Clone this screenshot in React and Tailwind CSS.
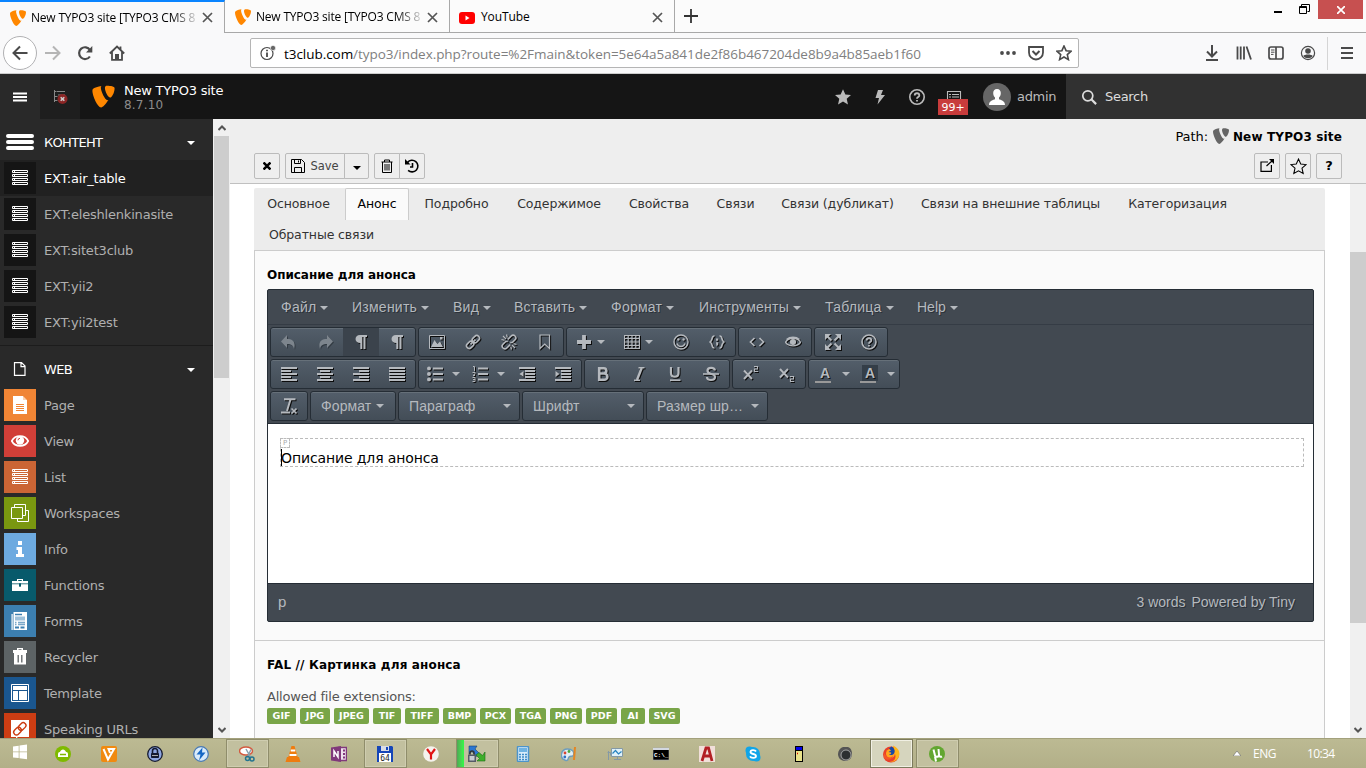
import React from "react";

const VERDANA = "font-['DejaVu_Sans',sans-serif]";
const SEGOE = "font-['Open_Sans',sans-serif]";

/* ---------- helpers ---------- */
function Svg({ s = 16, vb = "0 0 16 16", className = "", children, sw = 1.5, fill = "none", stroke = "currentColor" }) {
  return (
    <svg width={s} height={s} viewBox={vb} className={"block shrink-0 " + className} fill={fill} stroke={stroke} strokeWidth={sw}>
      {children}
    </svg>
  );
}

function Typo3({ s, color }) {
  return (
    <Svg s={s} fill={color} stroke="none">
      <path d="M11.1 10.3c-.2 0-.3.1-.5.1-1.7 0-4.3-6-4.3-8 0-.7.2-1 .4-1.2-2.1.3-4.7 1-5.5 2-.2.3-.3.6-.3 1.1 0 3.1 3.3 10.7 5.6 10.7 1.1 0 2.9-1.9 4.6-4.7" />
      <path d="M10.3 1.1c2.2 0 4.8.4 4.8 1.6 0 2.8-1.8 6-2.8 6-1.4 0-3.4-4-3.4-6.100 0-1.100.6-1.500 1.400-1.500" />
    </Svg>
  );
}

function Caret({ className = "" }) {
  return (
    <svg width="8" height="4" viewBox="0 0 8 4" className={"block shrink-0 " + className}>
      <path d="M0 0h8L4 4z" fill="currentColor" />
    </svg>
  );
}

const STAR = "M8 1l2.100 4.700 5 .5-3.800 3.400 1.100 5L8 12l-4.400 2.600 1.100-5L.9 6.200l5-.5z";

/* ---------- browser chrome ---------- */
function BrowserTab({ title, active, youtube }) {
  return (
    <div className={"flex h-[33px] w-[225px] shrink-0 items-center border-r border-[#a8a8a8] pl-[9px] " + (active ? "border-t-2 border-t-[#0a84ff] bg-[#f9f9fa]" : "border-b border-b-[#a8a8a8] pt-[2px]")}>
      {youtube ? (
        <svg width="16" height="12" viewBox="0 0 16 12" className="mt-[1px] shrink-0"><rect width="16" height="12" rx="3" fill="#f00" /><path d="M6.500 3.500l4 2.500-4 2.500z" fill="#fff" /></svg>
      ) : <Typo3 s={18} color="#ff8700" />}
      <span className={"w-[167px] whitespace-nowrap text-[12px] text-black " + (youtube ? "ml-[6px] tracking-[-0.100px]" : "ml-[4px] bg-[linear-gradient(90deg,#000_140px,transparent_170px)] bg-clip-text tracking-[-0.200px] text-transparent")}>{title}</span>
      <Svg s={11} vb="0 0 11 11" className="ml-[4px] text-[#555]" sw={1.7}><path d="M1 1l9 9M10 1l-9 9" /></Svg>
    </div>
  );
}

function Chrome() {
  return (
    <div className={"flex h-[74px] shrink-0 flex-col " + SEGOE}>
      <div className="flex h-[33px] bg-[#fbfbfb]">
        <BrowserTab title="New TYPO3 site [TYPO3 CMS 8" active />
        <BrowserTab title="New TYPO3 site [TYPO3 CMS 8" />
        <BrowserTab title="YouTube" youtube />
        <div className="flex flex-1 border-b border-[#a8a8a8] pl-[9px] pt-[9px] text-[#333]">
          <Svg s={14} vb="0 0 14 14" sw={1.800}><path d="M7 0v14M0 7h14" /></Svg>
        </div>
        <div className="flex h-[33px] items-start border-b border-[#a8a8a8]">
          <div className="mt-[11px] mr-[17px] h-[2px] w-[8px] bg-black" />
          <Svg s={11} vb="0 0 11 11" className="mt-[4px] mr-[8px] text-black" sw={1}><path d="M2.500 2.500v-2h8v7h-2M.5 2.500h7v7h-7zM.5 3.500h7" /></Svg>
          <div className="mr-[3px] flex h-[19px] w-[45px] items-center justify-center bg-[#c75050] text-white">
            <Svg s={8} vb="0 0 8 8" sw={1.700}><path d="M0 0l8 8M8 0L0 8" /></Svg>
          </div>
        </div>
      </div>
      <div className="flex h-[41px] items-center border-b border-[#ccc] bg-[#f9f9fa] pl-[3px] text-[#4a4a4a]">
        <div className="flex h-[34px] w-[34px] items-center justify-center rounded-full border border-[#b1b1b3] bg-white">
          <Svg s={16} sw={2}><path d="M15.500 8H2M8 1.500L1.500 8 8 14.500" /></Svg>
        </div>
        <Svg s={16} sw={2} className="ml-[8px] text-[#b5b5b5]"><path d="M0 8h14M8 1.500L14.500 8 8 14.500" /></Svg>
        <Svg s={16} sw={2.200} className="ml-[16px]"><path d="M12.900 11.500A5.900 5.900 0 1 1 13 5" /><path d="M15.300 1v6.500H9z" fill="currentColor" stroke="none" /></Svg>
        <Svg s={16} sw={1.800} className="ml-[16px]"><path d="M.8 8.500L8 1.500l7.200 7M3 7v7.800h10V7M11.500 1.500v3" /><path d="M6 9h4v5.500H6z" fill="currentColor" stroke="none" /></Svg>
        <div className="ml-[125px] flex h-[30px] w-[829px] items-center rounded-[2px] border border-[#b5b5b5] bg-white pl-[9px]">
          <Svg s={16} sw={1.200}><circle cx="7" cy="8.500" r="6" /><path d="M7 7.500v4.500M7 4.800v1.500" strokeWidth="1.800" /><circle cx="13" cy="3" r="2.600" fill="#666" stroke="#fff" strokeWidth=".6" /></Svg>
          <div className="ml-[8px] mt-[2px] flex-1 whitespace-nowrap text-[13.500px] tracking-[-0.050px] text-[#808080]"><span className="text-black">t3club.com</span>/typo3/index.php?route=%2Fmain&amp;token=5e64a5a841de2f86b467204de8b9a4b85aeb1f60</div>
          <Svg s={16} fill="currentColor" stroke="none"><circle cx="2" cy="8" r="1.900" /><circle cx="8" cy="8" r="1.900" /><circle cx="14" cy="8" r="1.900" /></Svg>
          <Svg s={16} sw={1.800} className="ml-[12px]"><path d="M1 2h14v5.500a7 7 0 0 1-14 0z" /><path d="M4.500 6L8 9.500 11.500 6" strokeWidth="2" /></Svg>
          <Svg s={16} sw={1.600} className="ml-[12px] mr-[6px]"><path d={STAR} /></Svg>
        </div>
        <div className="ml-auto flex h-full items-center">
          <Svg s={16} vb="0 0 14 16" sw={2}><path d="M7 0v11M2 6.500l5 5 5-5M1 15h12" /></Svg>
          <Svg s={16} sw={1.800} className="ml-[16px]"><path d="M1.500 1.500v13M4.700 1.500v13M8 1.500v13M10.500 1.500l4.500 13" /></Svg>
          <Svg s={16} sw={1.700} className="ml-[16px]"><rect x="1" y="2" width="14" height="12" rx="2" /><path d="M8 2v12" /><path d="M3 5h3.500M3 7.200h3.500M3 9.400h2.500" strokeWidth="1" /></Svg>
          <Svg s={16} sw={1.200} className="ml-[16px]"><circle cx="8" cy="8" r="6.600" /><circle cx="8" cy="6" r="2.800" fill="currentColor" stroke="none" /><path d="M3.300 11c1-2 8.400-2 9.400 0-2 3-7.400 3-9.400 0z" fill="currentColor" stroke="none" /></Svg>
          <div className="ml-[11px] h-[33px] w-px bg-[#d5d5d5]" />
          <Svg s={12} vb="0 0 12 12" sw={2} className="ml-[13px] mr-[13px]"><path d="M0 1h12M0 6h12M0 11h12" /></Svg>
        </div>
      </div>
    </div>
  );
}

/* ---------- TYPO3 top bar ---------- */
function TopBar() {
  return (
    <div className={"flex h-[45px] shrink-0 items-center bg-[#151515] text-[#bbb] " + VERDANA}>
      <div className="flex h-full w-[40px] items-center justify-center bg-[#292929] text-white">
        <Svg s={14} vb="0 0 14 9" sw={2}><path d="M0 1h14M0 4.500h14M0 8h14" /></Svg>
      </div>
      <div className="flex h-full w-[40px] items-center justify-center bg-[#1e1e1e] text-[#888]">
        <Svg s={16} sw={1} className="mt-[2px]"><path d="M2.500 0v12M2.500 1.500h2M5 1.500h8M2.500 6.500h3M2.500 10.500h3M6 5h7" /><circle cx="10.500" cy="9" r="5" fill="#8b2525" stroke="none" /><path d="M8.700 7.200l3.600 3.600M12.300 7.200l-3.600 3.600" stroke="#ccc" strokeWidth="1.600" /></Svg>
      </div>
      <div className="flex items-center pl-[11px]">
        <Typo3 s={25} color="#ff8700" />
        <div className="ml-[8px] mt-[2px] flex flex-col whitespace-nowrap">
          <span className="text-[13px] leading-[14px] tracking-[-0.220px] text-white">New TYPO3 site</span>
          <span className="text-[12px] leading-[14px] tracking-[0.200px] text-[#8c8c8c]">8.7.10</span>
        </div>
      </div>
      <div className="ml-auto flex h-full items-center">
        <Svg s={18} fill="currentColor" stroke="none"><path d={STAR} /></Svg>
        <Svg s={16} fill="currentColor" stroke="none" className="ml-[20px]"><path d="M6 1h5L9 6h4L5.500 15.500 7 9H3.500z" /></Svg>
        <Svg s={16} sw={1.600} className="ml-[21px]"><circle cx="8" cy="8" r="7.200" /><path d="M5.700 6.500c0-3 4.600-3 4.600 0 0 1.600-2.300 1.600-2.300 3.200M8 11v1.600" strokeWidth="1.800" /></Svg>
        <div className="relative ml-[21px] flex h-full w-[16px] items-center">
          <Svg s={16} sw={1.100}><path d="M1.500 2.500h13v11h-13zM3 5.500h2M6 5.500h7M3 8h2M6 8h7M3 10.500h10" /></Svg>
          <div className="absolute left-[-8px] top-[25px] flex h-[16px] w-[30px] items-center justify-center bg-[#c83c3c] pt-[2px] text-[11px] tracking-[0px] text-white">99+</div>
        </div>
        <div className="ml-[21px] flex h-[28px] w-[28px] items-center justify-center rounded-full bg-[#666] text-white">
          <Svg s={16} fill="currentColor" stroke="none"><path d="M8 0c2.600 0 3.800 1.700 3.800 4 0 2-.8 3.600-1.800 4.500v1.800c1.500.8 6 1.200 6 5.700H0c0-4.500 4.500-4.900 6-5.700V8.500C5 7.600 4.200 6 4.200 4 4.200 1.700 5.400 0 8 0z" /></Svg>
        </div>
        <span className="ml-[6px] w-[49px] whitespace-nowrap text-[13px] tracking-[-0.300px]">admin</span>
        <div className="flex h-full w-[300px] items-center bg-[#313131] pl-[15px] text-[#ddd]">
          <Svg s={16} sw={1.700}><circle cx="6.800" cy="6.800" r="5" /><path d="M10.300 10.300l4.800 4.800" strokeWidth="2.200" /></Svg>
          <span className="ml-[8px] text-[13px] tracking-[-0.300px]">Search</span>
        </div>
      </div>
    </div>
  );
}

/* ---------- module menu ---------- */
const ListGlyph = () => (
  <Svg s={16} sw={1}><path d="M.5 .5h15v2H.5zM.5 4.500h15v2H.5zM.5 8.500h15v2H.5zM.5 12.500h15v2H.5zM2.500 .5v2M2.500 4.500v2M2.500 8.500v2M2.500 12.500v2" /></Svg>
);
const PageGlyph = () => (
  <Svg s={18} vb="0 0 18 18" fill="#fff" stroke="none"><path d="M2 0h10v4h4v14H2z" /><path d="M12 0l4 4h-4z" fill="#fbd3b0" /><path d="M5 8.500h8M5 10.500h8M5 12.500h8M5 14.500h8" stroke="#f08535" strokeWidth="1" /></Svg>
);
const EyeGlyph = () => (
  <Svg s={18} vb="0 0 18 18" sw={1.700}><path d="M.8 9C4 2.600 14 2.600 17.200 9 14 15.400 4 15.400.8 9z" /><circle cx="9" cy="8.500" r="4.200" fill="#fff" stroke="none" /><path d="M7 8.300a2 2 0 0 1 2-2" stroke="#d13f38" strokeWidth="1" /></Svg>
);
const WorkGlyph = () => (
  <Svg s={18} vb="0 0 18 18" sw={1}><path d="M.5 3.500h11v11H.5zM3.500 3.500v-3h11v11h-3M14.500 6.500h3v11h-11v-3" /></Svg>
);
const InfoGlyph = () => (
  <Svg s={16} fill="#fff" stroke="none"><path d="M6 0h4v4H6zM4.500 6H10v7h2v3H4v-3h2V9H4.500z" /></Svg>
);
const FuncGlyph = () => (
  <Svg s={16} fill="#fff" stroke="none"><path d="M5 2h6v2h5v4.500H9V7H7v1.500H0V4h5zM6.200 3v1h3.600V3zM0 5.200z" fillRule="evenodd" /><path d="M0 7h7v2.500h2V7h7v7H0z" /><path d="M0 6.800h16" stroke="#085a6b" strokeWidth=".8" /><path d="M8 6v3.500" stroke="#085a6b" strokeWidth="1.400" /></Svg>
);
const FormGlyph = () => (
  <Svg s={18} vb="0 0 18 18" fill="#fff" stroke="none"><path d="M2.500 0H16v18H2.500zM.5 2h1.200v16H.5z" /><path d="M4 2.500h7" stroke="#3c7fb0" /><path d="M4 4.500h10v4H4z" fill="#9fc1da" /><path d="M4 10.500h1.500M7 10.500h7M4 12.500h1.500M7 12.500h7" stroke="#7aa8ca" /><path d="M4 14.500h4v2H4zM9.500 14.500h4v2h-4z" fill="#3c7fb0" /></Svg>
);
const BinGlyph = () => (
  <Svg s={18} vb="0 0 18 18" fill="#fff" stroke="none"><path d="M6 0h6v2h4v3H2V2h4zM7.500 1.200V2h3v-.8z" fillRule="evenodd" /><path d="M3 5h12v11.500H3z" /><path d="M7.200 7v7.500M10.800 7v7.500" stroke="#5d6365" strokeWidth="1.300" /></Svg>
);
const TplGlyph = () => (
  <Svg s={18} vb="0 0 18 18" sw={1}><path d="M.5 .5h17v17H.5z" /><path d="M2 2h14v4H2zM2 7h5v9H2zM8 7h8v9H8z" fill="#fff" stroke="none" /></Svg>
);
const LinkSign = () => (
  <Svg s={18} vb="0 0 18 18" fill="#fff" stroke="none"><path d="M0 0h18v17H7l-2 1.500V17H0z" /><g transform="rotate(-45 9 9)" fill="none" stroke="#cc3d13" strokeWidth="1.400"><rect x="1.500" y="6" width="8.500" height="5.500" rx="2.700" /><rect x="8" y="6" width="8.500" height="5.500" rx="2.700" /></g></Svg>
);

function ModuleRow({ label, color, Glyph, active }) {
  return (
    <div className={"flex h-[36px] shrink-0 items-center pl-[4px] text-[13px] tracking-[-0.200px] " + (active ? "bg-[#212121] text-white" : "text-[#b0b0b0]")}>
      <div className={"flex h-[32px] w-[32px] items-center justify-center text-white " + color}><Glyph /></div>
      <span className="ml-[8px] whitespace-nowrap pt-[2px]">{label}</span>
    </div>
  );
}

function ScrollArrow({ up }) {
  return (
    <Svg s={8} vb="0 0 8 8" sw={2} className="text-[#555]"><path d={up ? "M.5 6L4 2.500 7.500 6" : "M.5 2L4 5.500 7.500 2"} /></Svg>
  );
}

function Sidebar() {
  const ext = ["EXT:air_table", "EXT:eleshlenkinasite", "EXT:sitet3club", "EXT:yii2", "EXT:yii2test"];
  const web = [
    ["Page", "bg-[#f08535]", PageGlyph], ["View", "bg-[#d13f38]", EyeGlyph], ["List", "bg-[#cb6535]", ListGlyph],
    ["Workspaces", "bg-[#7a9710]", WorkGlyph], ["Info", "bg-[#6daae0]", InfoGlyph], ["Functions", "bg-[#085a6b]", FuncGlyph],
    ["Forms", "bg-[#3c7fb0]", FormGlyph], ["Recycler", "bg-[#5d6365]", BinGlyph], ["Template", "bg-[#1a568f]", TplGlyph],
    ["Speaking URLs", "bg-[#cc3d13]", LinkSign],
  ];
  return (
    <div className={"flex h-full w-[230px] shrink-0 " + VERDANA}>
      <div className="flex h-full w-[213px] flex-col overflow-hidden bg-[#292929]">
        <div className="flex h-[41px] shrink-0 items-center pl-[6px] pt-[5px] text-[13px] text-white">
          <svg width="28" height="16" viewBox="0 0 28 16" className="block shrink-0"><path d="M2 2h24M2 8h24M2 14h24" stroke="#fff" strokeWidth="4" strokeLinecap="round" /></svg>
          <span className="ml-[10px] flex-1 pt-[2px] tracking-[-0.700px]">КОНТЕНТ</span>
          <Caret className="mr-[18px] mt-px" />
        </div>
        {ext.map((e, i) => <ModuleRow key={e} label={e} color="bg-[#151515]" Glyph={ListGlyph} active={i === 0} />)}
        <div className="mt-[5px] h-px shrink-0 bg-[#1c1c1c]" />
        <div className="mt-[5px] flex h-[36px] shrink-0 items-center pl-[13px] text-[13px] tracking-[-0.600px] text-white">
          <Svg s={14} vb="0 0 14 14" sw={1.200}><path d="M1.500 .6h7l3.500 3.500v9.300H1.500zM8 .6v4h4" /></Svg>
          <span className="ml-[17px] flex-1 pt-[2px]">WEB</span>
          <Caret className="mr-[18px] mt-px" />
        </div>
        {web.map(([l, c, G]) => <ModuleRow key={l} label={l} color={c} Glyph={G} />)}
      </div>
      <div className="flex w-[17px] flex-col items-center bg-[#f0f0f0]">
        <div className="flex h-[17px] shrink-0 items-center"><ScrollArrow up /></div>
        <div className="h-[242px] w-[15px] shrink-0 bg-[#cdcdcd]" />
        <div className="mt-auto mb-[4px]"><ScrollArrow /></div>
      </div>
    </div>
  );
}

/* ---------- doc header ---------- */
const BTN = "flex h-[26px] items-center justify-center border border-[#bbb] bg-[#eee] text-black ";

function DocHeader() {
  return (
    <div className="flex h-[65px] shrink-0 flex-col border-b border-[#c0c0c0] bg-[#eee] pl-[24px] pr-[24px]">
      <div className="flex h-[34px] items-center justify-end text-black">
        <span className="pt-px text-[13px] tracking-[-0.100px]">Path:</span>
        <span className="ml-[4px]"><Typo3 s={18} color="#666" /></span>
        <span className="ml-[3px] whitespace-nowrap pt-[2px] text-[12px] font-bold tracking-[0.150px]">New TYPO3 site</span>
      </div>
      <div className="flex">
        <div className={BTN + "w-[26px] rounded-[2px]"}><Svg s={8} vb="0 0 8 8" sw={2.500}><path d="M.5 .5l7 7M7.500 .5l-7 7" /></Svg></div>
        <div className={BTN + "ml-[5px] w-[60px] rounded-l-[2px] text-[#333]"}>
          <Svg s={14} vb="0 0 14 14" sw={1}><path d="M.5 .5h10l3 3v10H.5zM3.500 .5v4h6v-4M3.500 13.500v-5h7v5M7.500 1.500v2" /></Svg>
          <span className="ml-[5px] mt-[2px] text-[11.500px] text-[#444]">Save</span>
        </div>
        <div className={BTN + "-ml-px w-[25px] rounded-r-[2px] text-[#333]"}><Caret className="mt-[4px]" /></div>
        <div className={BTN + "ml-[5px] w-[26px] rounded-l-[2px]"}><Svg s={14} vb="0 0 12 14" sw={1}><path d="M.5 3h11M3.500 3V1h5v2M1.500 3v10.500h9V3M4 5v6.500M6 5v6.500M8 5v6.500" /></Svg></div>
        <div className={BTN + "-ml-px w-[26px] rounded-r-[2px]"}><Svg s={14} vb="0 0 14 14" sw={1.600}><path d="M2.500 3.500a5.800 5.800 0 1 1 .6 7.800M7.500 4v4H5" /><path d="M0 0v5.500h5.500z" fill="currentColor" stroke="none" /></Svg></div>
        <div className="ml-auto flex gap-[5px]">
          <div className={BTN + "w-[26px] rounded-[2px]"}><Svg s={14} vb="0 0 14 14" sw={1.200}><path d="M8 3H1v9.400h10.400V6M6.500 7l5.500-5" /><path d="M9 0h5v5z" fill="currentColor" stroke="none" /></Svg></div>
          <div className={BTN + "w-[26px] rounded-[2px]"}><Svg s={17} sw={1}><path d={STAR} /></Svg></div>
          <div className={BTN + "w-[26px] rounded-[2px] text-[13px] font-bold"}>?</div>
        </div>
      </div>
    </div>
  );
}

/* ---------- editor ---------- */
const L = (d, extra = {}) => <Svg sw={2} {...extra}><path d={d} /></Svg>;
const ICO = {
  undo: <Svg fill="currentColor" stroke="none"><path d="M6 1v4c6 0 9 3 7 10-.6-3.500-2.500-5-7-5v4L0 7.500z" /></Svg>,
  redo: <Svg fill="currentColor" stroke="none"><path d="M10 1v4C4 5 1 8 3 15c.6-3.500 2.500-5 7-5v4l6-6.500z" /></Svg>,
  para: <Svg fill="currentColor" stroke="none"><path d="M14 1v2h-1.500v12h-2V3H9.300v12h-2V9C1 9 1 1 7 1z" /></Svg>,
  image: <Svg sw={1}><path d="M.5 1.500h15v13H.5z" /><path d="M2 13l3.500-7 3 4 2.500-2.500L14 13zM11 3h2.500v2.500H11z" fill="currentColor" stroke="none" /></Svg>,
  link: <Svg sw={1.600}><g transform="rotate(-45 8 8)"><rect x="0" y="5.300" width="8" height="5.400" rx="2.700" /><rect x="8" y="5.300" width="8" height="5.400" rx="2.700" /><path d="M4.500 8h7" strokeWidth="1.800" /></g></Svg>,
  unlink: <Svg sw={1.600}><g transform="rotate(-45 8 8)"><path d="M7 10.700H2.200a2.700 2.700 0 0 1 0-5.400H6l1.500 1.500M9 5.300h4.800a2.700 2.700 0 0 1 0 5.400H10L8.500 9.200" /></g><path d="M2 2l3 3M5.500 .5l.8 3M.5 5.500l3 .8M14 14l-3-3M10.500 15.500l-.8-3M15.500 10.500l-3-.8" strokeWidth="1.200" /></Svg>,
  mark: <Svg sw={1.200}><path d="M3 1h9.500v13.500L7.750 10 3 14.500z" /></Svg>,
  plus: L("M8 1v14M1 8h14", { sw: 3.800 }),
  table: <Svg sw={1}><path d="M.5 1.500h15v13H.5zM.5 4.500h15M.5 8h15M.5 11.500h15M4.200 1.500v13M8 1.500v13M11.800 1.500v13" strokeWidth="1.200" /></Svg>,
  smile: <Svg sw={1.400}><circle cx="8" cy="8" r="7" /><path d="M4 9.500c1.500 4 6.500 4 8 0" /><circle cx="5.400" cy="5.500" r="1.200" fill="currentColor" stroke="none" /><circle cx="10.600" cy="5.500" r="1.200" fill="currentColor" stroke="none" /></Svg>,
  code: <Svg sw={1.700}><path d="M5.500 2C2 1.500 4.200 7.200.6 8c3.600.8 1.400 6.500 4.900 6M10.500 2c3.500-.5 1.300 5.200 4.900 6-3.600.8-1.400 6.500-4.900 6" /><path d="M7 4.500h2.200v2.200H7zM7 8.200h2.200v2.500L7.500 12.500z" fill="currentColor" stroke="none" /></Svg>,
  source: <Svg sw={1.700}><path d="M5.500 4L1.500 8l4 4M10.500 4l4 4-4 4" /></Svg>,
  eye: <Svg sw={1.300}><path d="M.5 8.200C3.500 3 12.500 3 15.500 8.200 12.500 13 3.500 13 .5 8.200zM1.500 5.500C5 2.500 11 2.500 14.500 5.500" /><circle cx="8" cy="8" r="2.400" fill="currentColor" /></Svg>,
  full: <Svg sw={2}><path d="M2 2l4.500 4.500M14 2L9.500 6.500M2 14l4.500-4.500M14 14L9.500 9.500" /><path d="M0 0h6L0 6zM16 0h-6l6 6zM0 16h6l-6-6zM16 16h-6l6-6z" fill="currentColor" stroke="none" /></Svg>,
  help: <Svg sw={1.600}><circle cx="8" cy="8" r="7" /><path d="M5.700 6.500c0-3 4.600-3 4.600 0 0 1.600-2.300 1.600-2.300 3.200M8 11v1.600" strokeWidth="1.800" /></Svg>,
  left: L("M0 2h16M0 5h10M0 8h16M0 11h10M0 14h16", { sw: 1.800 }),
  center: L("M0 2h16M3 5h10M0 8h16M3 11h10M0 14h16", { sw: 1.800 }),
  right: L("M0 2h16M6 5h10M0 8h16M6 11h10M0 14h16", { sw: 1.800 }),
  just: L("M0 2h16M0 5h16M0 8h16M0 11h16M0 14h16", { sw: 1.800 }),
  ul: <Svg sw={2}><path d="M6 2.500h11M6 8h11M6 13.500h11" /><circle cx="2" cy="2.500" r="2" fill="currentColor" stroke="none" /><circle cx="2" cy="8" r="2" fill="currentColor" stroke="none" /><circle cx="2" cy="13.500" r="2" fill="currentColor" stroke="none" /></Svg>,
  ol: <Svg sw={2}><path d="M6 2.500h10M6 8h10M6 13.500h10" /><path d="M1 .5h1.500V5M.5 6.500h2.500v1.500L1 9.500h2M.5 11.500h2.500v4H.5M1 13.500h2" strokeWidth="1" /></Svg>,
  outdent: <Svg sw={1.800}><path d="M0 2h16M6 5h10M6 8h10M6 11h10M0 14h16" /><path d="M4.500 5v6L.5 8z" fill="currentColor" stroke="none" /></Svg>,
  indent: <Svg sw={1.800}><path d="M0 2h16M6 5h10M6 8h10M6 11h10M0 14h16" /><path d="M.5 5v6l4-3z" fill="currentColor" stroke="none" /></Svg>,
  bold: <Svg sw={2.600}><path d="M4.200 2.200h4.500a2.600 2.600 0 0 1 0 5.300H4.200zM4.200 7.500h5a3.100 3.100 0 0 1 0 6.300h-5z" /></Svg>,
  italic: <Svg sw={2.400}><path d="M10.700 2L6 14" /><path d="M7.500 1.700h6M3 14.300h6" strokeWidth="1.400" /></Svg>,
  under: <Svg sw={2.200}><path d="M4 1v6c0 5 7.500 5 7.500 0V1" /><path d="M3 14.200h10.500" strokeWidth="1.700" /></Svg>,
  strike: <Svg sw={2.200}><path d="M12 4.500C11.500 1 4.500 1 4.500 4.700c0 2.500 3 2.800 4 3.300 2 .5 3.500 1 3.500 3 0 4-8 4-8 0" /><path d="M0 8h16" strokeWidth="1.600" /></Svg>,
  sup: <Svg sw={2}><path d="M1 4.500l8 8.500M9 4.500L1 13" /><path d="M11 .5h3.500V3H11.500v2.500h3.500" strokeWidth="1.200" /></Svg>,
  sub: <Svg sw={2}><path d="M1 3l8 8.500M9 3l-8 8.500" /><path d="M11 10.500h3.500V13H11.500v2.500h3.500" strokeWidth="1.200" /></Svg>,
  clear: <Svg sw={2}><path d="M3 1.200h11.500M9.500 1.500L6 13M0 14.500h9" /><path d="M10.500 10.500l5 5M15.500 10.500l-5 5" strokeWidth="1.600" /></Svg>,
};
const DROP = "[filter:drop-shadow(1px_1px_0_#0c0c0c)]";

function Group({ items }) {
  return (
    <div className="flex h-[30px] overflow-hidden rounded-[3px] border border-[#252d35] bg-gradient-to-b from-[#535e6a] to-[#434d57] shadow-[inset_0_1px_0_#667079]">
      {items.map((it, i) => {
        const [name, w, state] = it;
        const wc = w === 48 ? "w-[48px] pl-[9px]" : w === 45 ? "w-[45px] pl-[8px]" : "w-[36px] justify-center";
        return (
          <div key={i} className={"flex items-center " + wc + (state === "on" ? " bg-[#3b434c]" : "") + (state === "off" ? " text-[#7d858d]" : "")}>
            {name === "fore" || name === "back" ? (
              <span className="-ml-[2px] flex w-[16px] flex-col items-start border-b-2 border-[#999]"><span className={"ml-[2px] flex h-[16px] w-[16px] items-center justify-center text-[14px] font-bold leading-none [text-shadow:1px_1px_#111] " + (name === "back" ? "bg-[#343e48]" : "")}>A</span></span>
            ) : <span className={state === "off" ? "[filter:drop-shadow(1px_1px_0_#333b43)]" : DROP}>{ICO[name]}</span>}
            {w > 40 && <Caret className={w === 48 ? "ml-[5px]" : name === "fore" || name === "back" ? "ml-[11px]" : "ml-[9px]"} />}
          </div>
        );
      })}
    </div>
  );
}

function Select({ label, w, gap }) {
  return (
    <div className={"flex h-[30px] items-center rounded-[3px] border border-[#252d35] bg-gradient-to-b from-[#535e6a] to-[#434d57] pl-[10px] shadow-[inset_0_1px_0_#667079] " + w}>
      <span className="whitespace-nowrap text-[14px] tracking-[0.100px]">{label}</span>
      <Caret className={gap} />
    </div>
  );
}

function Editor() {
  const menus = [["Файл", "w-[71px]"], ["Изменить", "w-[101px]"], ["Вид", "w-[61px]"], ["Вставить", "w-[97px]"], ["Формат", "w-[88px]"], ["Инструменты", "w-[126px]"], ["Таблица", "w-[92px]"], ["Help", "w-[60px]"]];
  return (
    <div className="flex h-[333px] flex-col overflow-hidden rounded-[2px] border border-[#252d35] bg-[#424951] font-['Liberation_Sans',sans-serif] text-[#b5b9be]">
      <div className="flex h-[35px] shrink-0 items-center border-b border-[#353c45] pl-[13px] text-[14px] tracking-[0.250px] [text-shadow:1px_1px_#2b323a]">
        {menus.map(([m, w]) => (
          <div key={m} className={"flex items-center " + w}><span className={m === "Help" ? "tracking-[0px]" : ""}>{m}</span><Caret className="ml-[4px] mt-px" /></div>
        ))}
      </div>
      <div className="flex h-[98px] shrink-0 flex-col gap-[2px] pl-[2px] pt-[2px]">
        <div className="flex gap-[2px]">
          <Group items={[["undo", 36, "off"], ["redo", 36, "off"], ["para", 36, "on"], ["para", 36]]} />
          <Group items={[["image", 36], ["link", 36], ["unlink", 36], ["mark", 36]]} />
          <Group items={[["plus", 48], ["table", 48], ["smile", 36], ["code", 36]]} />
          <Group items={[["source", 36], ["eye", 36]]} />
          <Group items={[["full", 36], ["help", 36]]} />
        </div>
        <div className="flex gap-[2px]">
          <Group items={[["left", 36], ["center", 36], ["right", 36], ["just", 36]]} />
          <Group items={[["ul", 45], ["ol", 45], ["outdent", 36], ["indent", 36]]} />
          <Group items={[["bold", 36], ["italic", 36], ["under", 36], ["strike", 36]]} />
          <Group items={[["sup", 36], ["sub", 36]]} />
          <Group items={[["fore", 45], ["back", 45]]} />
        </div>
        <div className="flex gap-[2px]">
          <Group items={[["clear", 36]]} />
          <Select label="Формат" w="w-[86px]" gap="ml-[5px]" />
          <Select label="Параграф" w="w-[122px]" gap="ml-auto mr-[8px]" />
          <Select label="Шрифт" w="w-[122px]" gap="ml-auto mr-[8px]" />
          <Select label="Размер шр…" w="w-[122px]" gap="ml-auto mr-[8px]" />
        </div>
      </div>
      <div className={"h-[161px] shrink-0 border-y border-[#252d35] bg-white pl-[12px] pr-[9px] pt-[14px] text-black " + VERDANA}>
        <div className="relative h-[29px] border border-dashed border-[#bbb]">
          <span className="absolute left-[-1px] top-[-1px] flex h-[10px] w-[10px] items-center justify-center border border-dashed border-[#bbb] bg-white text-[7px] text-[#aaa]">P</span>
          <div className="flex h-[27px] items-end"><span className="h-[17px] w-px bg-black" /><span className="-ml-px text-[14px] leading-[15px] tracking-[-0.120px]">Описание для анонса</span></div>
        </div>
      </div>
      <div className="flex flex-1 items-center pl-[10px] pr-[18px] text-[14px]">
        <span className="text-[15px]">p</span>
        <span className="ml-auto [text-shadow:1px_1px_#2b323a]">3 words</span>
        <span className="ml-[6px] [text-shadow:1px_1px_#2b323a]">Powered by Tiny</span>
      </div>
    </div>
  );
}

function Content() {
  const tabs = [["Основное", "w-[89px]"], ["Анонс", "w-[64px]"], ["Подробно", "w-[91px]"], ["Содержимое", "w-[110px]"], ["Свойства", "w-[86px]"], ["Связи", "w-[63px]"], ["Связи (дубликат)", "w-[137px]"], ["Связи на внешние таблицы", "w-[205px]"], ["Категоризация", "w-[125px]"]];
  const exts = [["GIF", "w-[29px]"], ["JPG", "w-[30px]"], ["JPEG", "w-[35px]"], ["TIF", "w-[28px]"], ["TIFF", "w-[34px]"], ["BMP", "w-[33px]"], ["PCX", "w-[31px]"], ["TGA", "w-[31px]"], ["PNG", "w-[32px]"], ["PDF", "w-[31px]"], ["AI", "w-[24px]"], ["SVG", "w-[31px]"]];
  return (
    <div className="flex min-h-0 flex-1 bg-white">
      <div className="flex min-h-0 flex-1 flex-col overflow-hidden pl-[24px] pr-[25px] pt-[4px]">
        <div className="h-[62px] shrink-0 rounded-t-[2px] bg-[#ececec] text-[12.500px] tracking-[-0.120px] text-[#333]">
          <div className="flex gap-[2px]">
            {tabs.map(([t, w], i) => (
              <div key={t} className={"flex h-[32px] items-center justify-center whitespace-nowrap " + w + (i === 1 ? " rounded-t-[2px] border border-b-0 border-[#ccc] bg-[#fafafa] pb-px text-black" : " pt-px")}>{t}</div>
            ))}
          </div>
          <div className="flex h-[29px] items-center pl-[15px] pt-[2px]">Обратные связи</div>
        </div>
        <div className="flex min-h-0 flex-1 flex-col border border-b-0 border-[#ccc] bg-[#fafafa]">
          <div className="flex h-[390px] shrink-0 flex-col border-b border-[#ccc] px-[12px] pr-[10px] pt-[14px]">
            <div className="h-[24px] text-[12px] font-bold leading-[21px] tracking-[-0.040px] text-black">Описание для анонса</div>
            <Editor />
          </div>
          <div className="flex flex-col pl-[12px] pt-[14px]">
            <div className="h-[32px] text-[12px] font-bold leading-[21px] tracking-[0.150px] text-black">FAL // Картинка для анонса</div>
            <div className="h-[21px] text-[13px] leading-[19px] tracking-[-0.200px] text-[#555]">Allowed file extensions:</div>
            <div className="flex gap-[4px]">
              {exts.map(([e, w]) => <div key={e} className={"flex h-[16px] items-center justify-center rounded-[2px] bg-[#79a548] text-[9.500px] font-bold text-white " + w}>{e}</div>)}
            </div>
          </div>
        </div>
      </div>
      <div className="flex w-[16px] shrink-0 flex-col items-center bg-[#f0f0f0]">
        <div className="mt-[68px] h-[371px] w-[16px] bg-[#cdcdcd]" />
        <div className="mt-auto mb-[4px]"><ScrollArrow /></div>
      </div>
    </div>
  );
}

/* ---------- taskbar ---------- */
const APPS = [
  <Svg key="win" s={16} fill="#fff" stroke="none" className="-mt-[3px]"><path d="M1 2.500l5.700-.8v5.800H1zM7.500 1.500L15 .5v7H7.500zM1 8.300h5.700v5.800L1 13.500zM7.500 8.300H15v7l-7.500-1z" /></Svg>,
  <Svg key="bag" s={16} fill="#fff" stroke="none"><circle cx="8" cy="8" r="8" fill="#7fba00" /><path d="M3 8c0-2 2-2 2-2 1-3.500 5-3.500 6 0 0 0 2 0 2 2v3H3z" /><path d="M5 8.500h6" stroke="#7fba00" strokeWidth="1.500" /></Svg>,
  <Svg key="v" s={16} fill="#fff" stroke="none"><rect width="16" height="16" rx="2" fill="#f08a10" /><path d="M2.500 3l4.500 10.500L13 3H7.500l1.500 4" fill="none" stroke="#fff" strokeWidth="2" /></Svg>,
  <Svg key="lock" s={16} stroke="#151a30" sw={1.300} fill="#8ea6e0"><circle cx="8" cy="8" r="7.300" /><path d="M5.500 7V5a2.500 2.500 0 0 1 5 0v2" fill="none" strokeWidth="1.600" /><path d="M4.500 7.500h7v4h-7z" fill="#151a30" strokeWidth="1" /><path d="M5 9.500h6" stroke="#aaa" strokeWidth="1" /></Svg>,
  <Svg key="bolt" s={16} stroke="#4779b5" sw={1.200} fill="#d9ebfa"><circle cx="8" cy="8" r="7.300" /><path d="M9.500 1.500L3.500 8.500h4L6 14.500l6.500-8H9z" fill="#1668c5" stroke="none" /></Svg>,
  <Svg key="snip" s={16} stroke="#d35a40" sw={1.500} fill="#fff"><ellipse cx="7" cy="5" rx="6.500" ry="4" /><path d="M7 3l5 9M12 3.500L8 12" stroke="#8aa0ad" /><g fill="none" stroke="#24748f"><circle cx="8.500" cy="12.500" r="2" /><circle cx="13" cy="13" r="2" /></g></Svg>,
  <Svg key="vlc" s={16} fill="#ef7c0f" stroke="none"><path d="M6.500 0h3L13 12H3z" /><path d="M2 11h12l1.500 5H.5z" /><path d="M5.700 4.500h4.600M4.500 9h7" stroke="#fff" strokeWidth="2" /></Svg>,
  <Svg key="one" s={16} fill="#80397b" stroke="none"><path d="M8 1.500h7.500v13H8z" fill="#efe2ee" stroke="#80397b" /><path d="M0 1.500L10 0v16L0 14.500z" /><path d="M3 11V5l4 6V5" stroke="#fff" strokeWidth="1.500" fill="none" /><path d="M12 3.500h2v2h-2zM12 7h2v2h-2zM12 10.500h2v2h-2z" /></Svg>,
  <svg key="d64" width="16" height="16" viewBox="0 0 16 16"><path d="M0 0h15l1 1v15H0z" fill="#1646b8" /><path d="M4 0h8v5H4z" fill="#d9dce5" /><path d="M9 1h2v3H9z" fill="#1646b8" /><path d="M2 7h12v9H2z" fill="#fff" /><text x="8" y="14.500" fontSize="8" textAnchor="middle" fontFamily="DejaVu Sans Mono" fill="#222">64</text></svg>,
  <Svg key="ya" s={16} fill="#f5f3ee" stroke="none"><circle cx="8" cy="8" r="7.800" /><path d="M4 3L8 8.500 12 3M8 8v5.500" fill="none" stroke="#e01515" strokeWidth="2.200" /></Svg>,
  <Svg key="scp" s={18} vb="0 0 18 18" fill="#2b76d2" stroke="none"><path d="M1 1h8L7 4l4.500 4.500-3 3L4 6.500 1 9z" stroke="#17416f" strokeWidth=".6" /><path d="M17 7v9H9l2.500-2.500L8 10l3-2.500 3.500 3z" fill="#3fae2c" stroke="#1d6b16" strokeWidth=".6" /><path d="M0 9.500h8V17H0z" fill="#555b66" /><path d="M2 9.500V8a2 2 0 0 1 4 0v1.500" fill="none" stroke="#333" strokeWidth="1.500" /><path d="M1.500 11h5v4.500h-5z" fill="#c9ccd2" /></Svg>,
  <Svg key="calc" s={16} fill="#d9ecfa" stroke="none"><rect x="2.500" y=".5" width="11" height="15" rx="1" stroke="#4c94cb" /><path d="M4 2h8v4H4z" fill="#6fb3e2" /><path d="M4 8.500h8M4 11h8M4 13.500h8" stroke="#3d8bc8" strokeWidth="1.500" strokeDasharray="2 1" /></Svg>,
  <Svg key="paint" s={16} stroke="none"><path d="M6.500 3c5 0 7 3 6 6-1 2.500-3 .5-4.500 2s0 4-3 3.500C-2 13-.5 3 6.500 3z" fill="#e3eef5" stroke="#6d9dbd" /><circle cx="4" cy="7" r="1.400" fill="#d84532" /><circle cx="8" cy="5.500" r="1.400" fill="#4aa83d" /><circle cx="3.800" cy="11" r="1.400" fill="#2f6fc4" /><path d="M14 1l-1 13" stroke="#e58622" strokeWidth="2" /></Svg>,
  <Svg key="mon" s={16} sw={1} fill="#dff1fa" stroke="#8499a5"><path d="M4.500 2.500h11v8h-11z" /><path d="M5.500 7.500l3-3 3 3.500 3-2.500" fill="none" stroke="#2784c0" strokeWidth="1.200" /><path d="M7 13.500h7M10.500 11v2M1.500 5v9M.5 6.500h3v3" fill="none" /></Svg>,
  <svg key="cmd" width="16" height="14" viewBox="0 0 16 14"><path d="M0 1h16v12H0z" fill="#000" stroke="#a3aab5" strokeWidth=".6" /><path d="M0 1h16v2H0z" fill="#d3d8e0" /><text x="1" y="10" fontSize="6" fontWeight="bold" fontFamily="Liberation Mono" fill="#fff">C:\_</text></svg>,
  <Svg key="acad" s={16} fill="#f1dfda" stroke="none"><path d="M0 0h16v16H0z" /><path d="M3 15L7 2h2.500L13 15M5 10h7" stroke="#b21f24" strokeWidth="2.800" fill="none" /></Svg>,
  <Svg key="sky" s={16} fill="#10a5e8" stroke="none"><circle cx="8" cy="8" r="7" /><circle cx="4.500" cy="4.500" r="4" /><circle cx="11.500" cy="11.500" r="4" /><path d="M11 5.500C10 3.500 5.500 3.500 5.500 6c0 2.700 5.500 1.300 5.500 4 0 2.500-5 2.500-6 .3" fill="none" stroke="#fff" strokeWidth="1.800" /></Svg>,
  <Svg key="tc" s={16} fill="#000" stroke="none"><path d="M4 0h8v16H4z" /><path d="M5 1h6v3H5z" fill="#0000e8" /><path d="M5 5h6v10H5z" fill="#e9e38a" /><path d="M6 7.500h1" stroke="#e00000" /></Svg>,
  <Svg key="cam" s={16} fill="#555" stroke="none"><path d="M6 1h5c3 1 4 4 4 7s-2 7-7 7-7-4-7-7 2-6 5-7z" /><circle cx="9" cy="9" r="5" fill="#2d2f31" stroke="#bbb" strokeWidth=".8" /></Svg>,
  <Svg key="ff" s={18} vb="0 0 18 18" fill="#e8402a" stroke="none"><circle cx="9" cy="9.500" r="8" /><path d="M11 .5c5 2 7.500 6.500 6 10.500-1.500 4.500-6 6.500-9.500 6 5 0 7-4 5.500-8z" fill="#ffb61a" /><circle cx="8.500" cy="8.500" r="4.500" fill="#ffa51f" /><path d="M9.500 1.500c3 1.500 4 4.500 2.500 7-1.500 2-4 2-5 .5 2 .3 2.500-.7 2-1.500L6.500 7 9 5.500 7 3.500z" fill="#174aa5" /><path d="M1.500 4.500C1.500 9 3 9 4.500 11c1.500 2 4 2 6.500 0-.5 4-6 5-9 2z" fill="#f4552a" /></Svg>,
  <Svg key="ut" s={16} fill="#62a630" stroke="none"><circle cx="8" cy="8" r="8" /><path d="M4.500 3.500L6 9.500c.5 2 4.500 1.500 4-1L9.500 3M10 9c.5 2 2 2 3 1.500M6 10.500l1 5" stroke="#fff" strokeWidth="2" fill="none" /></Svg>,
];

function Taskbar() {
  return (
    <div className="flex h-[30px] shrink-0 items-stretch border-t border-[#a3a17c] bg-gradient-to-b from-[#bcba93] to-[#b2af88]">
      <div className="flex w-[40px] items-center justify-center">{APPS[0]}</div>
      {APPS.slice(1).map((a, i) => {
        const open = [4, 7, 9, 19].includes(i);
        const current = i === 18;
        return (
          <div key={i} className="flex w-[46px] justify-center">
            <div className={"relative flex w-[43px] items-center justify-center " + (open ? "border border-[#8f8d6b] bg-[#c2c09f] shadow-[inset_0_0_0_1px_#cfcdb0]" : current ? "border border-[#7c7a5c] bg-[#d6d5be] shadow-[inset_0_0_0_1px_#f1f0e4]" : "")}>
              {i === 9 && <span className="absolute inset-y-0 left-0 w-[7px] bg-gradient-to-r from-[#4ea854] to-[#2dfb45]" />}
              {a}
            </div>
          </div>
        );
      })}
      <div className={"ml-auto flex items-center whitespace-nowrap text-[12px] text-white " + SEGOE}>
        <svg width="8" height="5" viewBox="0 0 8 5"><path d="M0 5l4-5 4 5z" fill="#fff" stroke="#666" strokeWidth=".6" /></svg>
        <span className="ml-[12px] w-[54px] tracking-[-0.500px]">ENG</span>
        <span className="w-[59px] tracking-[-0.600px]">10:34</span>
      </div>
    </div>
  );
}

export default function App() {
  return (
    <div className="flex h-[768px] w-[1366px] flex-col overflow-hidden bg-white">
      <Chrome />
      <TopBar />
      <div className="flex min-h-0 flex-1">
        <Sidebar />
        <div className={"flex min-w-0 flex-1 flex-col " + VERDANA}>
          <DocHeader />
          <Content />
        </div>
      </div>
      <Taskbar />
    </div>
  );
}
